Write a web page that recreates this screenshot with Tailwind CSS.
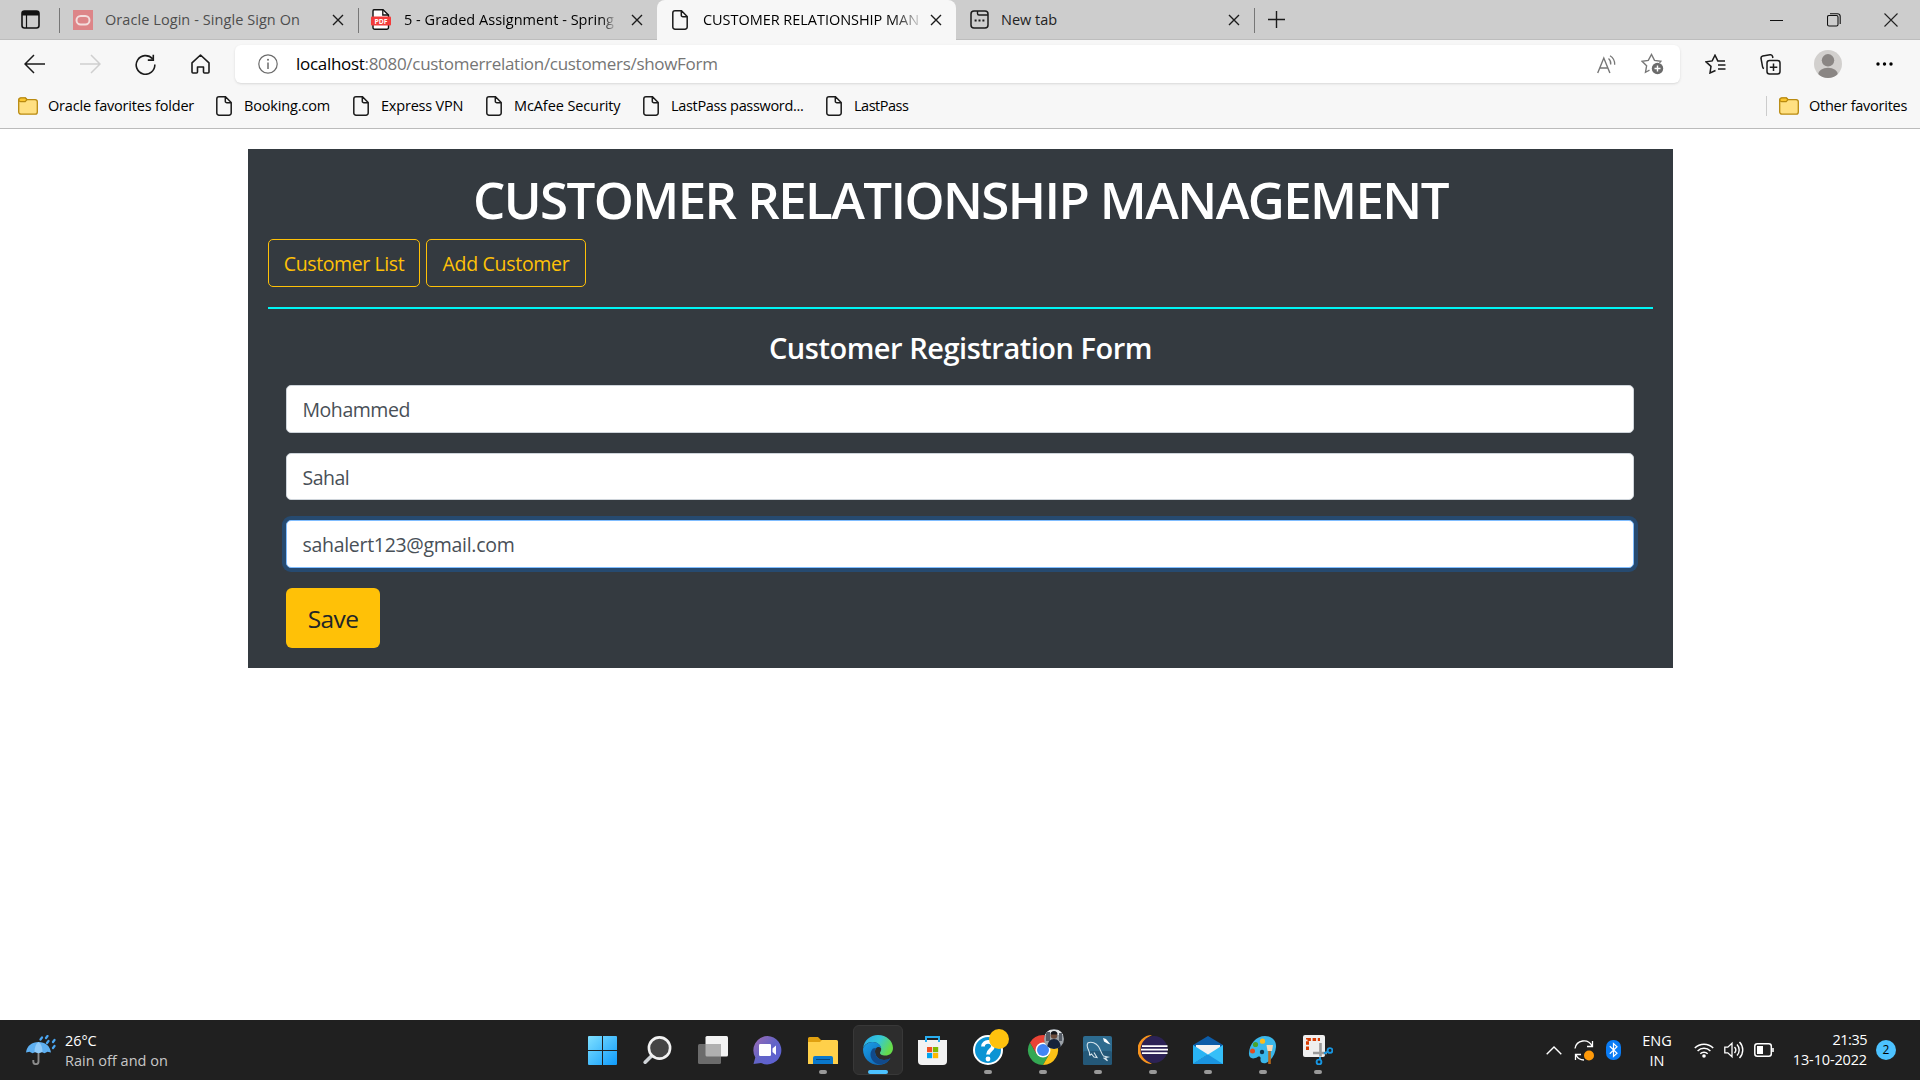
<!DOCTYPE html>
<html lang="en">
<head>
<meta charset="utf-8">
<title>CUSTOMER RELATIONSHIP MANAGEMENT</title>
<script src="https://cdn.jsdelivr.net/npm/@tailwindcss/browser@4"></script>
</head>
<body class="w-[1920px] h-[1080px] overflow-hidden bg-white font-['Open_Sans','Noto_Sans',sans-serif] flex flex-col text-[14.5px] whitespace-nowrap text-black">
<svg class="hidden">
  <symbol id="x" viewBox="0 0 12 12"><path d="M1 1l10 10M11 1L1 11" stroke="#1b1b1b" stroke-width="1.4" fill="none"/></symbol>
  <symbol id="page" viewBox="0 0 16 20"><path d="M3 .8h6.5L15.2 6.5V17a2.2 2.2 0 0 1-2.2 2.2H3A2.2 2.2 0 0 1 .8 17V3A2.2 2.2 0 0 1 3 .8zM9.3 1v4.2a1.6 1.6 0 0 0 1.6 1.6H15" stroke="#1b1b1b" stroke-width="1.5" fill="none"/></symbol>
  <symbol id="folder" viewBox="0 0 20 18"><path d="M.7 3v12a2.2 2.2 0 0 0 2.2 2.2h14.2a2.2 2.2 0 0 0 2.2-2.2V4.800a2.200 2.200 0 0 0-2.200-2.200H9.200L7.500.9H2.900A2.200 2.200 0 0 0 .7 3z" fill="#ffe082" stroke="#b98a10" stroke-width="1.300"/><path d="M.9 3A2 2 0 0 1 3 1h4.300l1.600 1.700-1.700 1.900H2.500A1.700 1.700 0 0 1 .9 3z" fill="#fbc62f" stroke="#b98a10" stroke-width="1.100"/></symbol>
</svg>

<!-- tab strip -->
<header class="h-10 bg-[#cdcdcd] flex shrink-0 border-b border-[#bdbdbd]">
  <div class="w-[59px] flex items-center pl-[20.500px]">
    <svg class="w-[19px] h-[19px]" viewBox="0 0 19 19"><rect x="1" y="1" width="17" height="17" rx="2.5" fill="none" stroke="#111" stroke-width="1.600"/><path d="M1 5.500V3a2 2 0 0 1 2-2h13a2 2 0 0 1 2 2v2.500z" fill="#111"/><path d="M5.500 5v13" stroke="#111" stroke-width="1.200"/></svg>
  </div>
  <div class="w-px h-[25px] mt-2 bg-[#777]"></div>
  <div class="w-[298px] flex items-center pl-[13px]">
    <svg class="w-5 h-5" viewBox="0 0 20 20"><rect width="20" height="20" fill="#dd8588"/><rect x="3.500" y="6" width="13" height="8.500" rx="4.200" fill="none" stroke="#f3dddd" stroke-width="2"/></svg>
    <span class="ml-3 w-[227px] text-[#4d4d4d] tracking-[0.07px]">Oracle Login - Single Sign On</span>
    <svg class="w-3 h-3"><use href="#x"/></svg>
  </div>
  <div class="w-px h-[25px] mt-2 bg-[#777]"></div>
  <div class="w-[298px] flex items-center pl-3">
    <svg class="w-5 h-[21px]" viewBox="0 0 20 21"><path d="M3 .8h9L17.500 6v12.500a1.800 1.800 0 0 1-1.800 1.800H3.800A1.800 1.800 0 0 1 2 18.500V2A1.200 1.200 0 0 1 3 .8z" fill="#fff" stroke="#111" stroke-width="1.400"/><path d="M11.800.8V6h5.700" fill="none" stroke="#111" stroke-width="1.300"/><rect y="7.500" width="20" height="9" rx="1" fill="#f33b3b"/><text x="10" y="14.600" font-size="6.800" font-weight="700" text-anchor="middle" fill="#fff">PDF</text></svg>
    <span class="ml-[13px] w-[227px] overflow-hidden"><span class="tracking-[0.03px] bg-linear-to-r from-black from-93% to-[#aaa] bg-clip-text text-transparent">5 - Graded Assignment - Spring</span></span>
    <svg class="w-3 h-3"><use href="#x"/></svg>
  </div>
  <div class="w-[299px] h-10 bg-[#f7f7f7] rounded-t-lg flex items-center pl-[15px] relative z-10">
    <svg class="w-4 h-5"><use href="#page"/></svg>
    <span class="ml-[15px] w-[227px] overflow-hidden"><span class="tracking-[-0.04px] bg-linear-to-r from-black from-85% to-[#ccc] bg-clip-text text-transparent">CUSTOMER RELATIONSHIP MAN</span></span>
    <svg class="w-3 h-3"><use href="#x"/></svg>
  </div>
  <div class="w-[298px] flex items-center pl-[14px]">
    <svg class="w-[19px] h-[19px]" viewBox="0 0 19 19"><rect x="1" y="1" width="17" height="17" rx="3" fill="none" stroke="#1b1b1b" stroke-width="1.500"/><path d="M7.500 1v2.500a1.500 1.500 0 0 0 1.500 1.500h9" fill="none" stroke="#1b1b1b" stroke-width="1.400"/><path d="M4.600 10.500h2M8.500 10.500h2M12.400 10.500h2" stroke="#1b1b1b" stroke-width="2"/></svg>
    <span class="ml-[12px] w-[227px] text-[#222]">New tab</span>
    <svg class="w-3 h-3"><use href="#x"/></svg>
  </div>
  <div class="w-px h-[25px] mt-2 bg-[#777]"></div>
  <div class="flex items-center pl-[13px]"><svg class="w-[17px] h-[17px]" viewBox="0 0 17 17"><path d="M8.500 0v17M0 8.500h17" stroke="#1b1b1b" stroke-width="1.400"/></svg></div>
  <div class="ml-auto mr-[22px] flex items-center gap-[43px]">
    <svg class="w-[14px] h-[14px]" viewBox="0 0 14 14"><path d="M0 7.500h13" stroke="#111"/></svg>
    <svg class="w-[14px] h-[14px]" viewBox="0 0 14 14"><rect x=".5" y="2.500" width="10.500" height="10.500" rx="1.500" fill="none" stroke="#111" stroke-width="1.100"/><path d="M3 .7h7.500A2.700 2.700 0 0 1 13.200 3.400V11" fill="none" stroke="#111" stroke-width="1.100"/></svg>
    <svg class="w-[14px] h-[14px]" viewBox="0 0 14 14"><path d="M.5.5l13 13M13.500.5l-13 13" stroke="#222" stroke-width="1.100"/></svg>
  </div>
</header>

<!-- address row -->
<div class="h-[48px] bg-[#f7f7f7] shrink-0 flex items-center pl-6">
  <svg class="w-[21px] h-5" viewBox="0 0 21 20"><path d="M10 1L1 10l9 9M1 10h20" fill="none" stroke="#1b1b1b" stroke-width="1.500"/></svg>
  <svg class="w-[21px] h-5 ml-[35px]" viewBox="0 0 21 20"><path d="M11 1l9 9-9 9M20 10H0" fill="none" stroke="#cfcfcf" stroke-width="1.500"/></svg>
  <svg class="w-[21px] h-[21px] ml-[34px]" viewBox="0 0 21 21"><path d="M17.500 4.800A9.300 9.300 0 1 0 19.800 10.500M18.300.8v5.300h-5.500" fill="none" stroke="#1b1b1b" stroke-width="1.600"/></svg>
  <svg class="w-[19px] h-5 ml-[35px]" viewBox="0 0 19 20"><path d="M1 8.800L9.500 1 18 8.800V18a1 1 0 0 1-1 1h-3.500a1 1 0 0 1-1-1v-5H6.500v5a1 1 0 0 1-1 1H2a1 1 0 0 1-1-1z" fill="none" stroke="#1b1b1b" stroke-width="1.600" stroke-linejoin="round"/></svg>
  <div class="ml-[25px] w-[1445px] h-[38px] bg-white rounded-md shadow-sm flex items-center pl-[23px] text-[17px]">
    <svg class="w-5 h-5" viewBox="0 0 20 20"><circle cx="10" cy="10" r="9.200" fill="none" stroke="#6b6b6b" stroke-width="1.200"/><path d="M10 8.500V15" stroke="#6b6b6b" stroke-width="1.500"/><circle cx="10" cy="5.800" r="1" fill="#6b6b6b"/></svg>
    <span class="ml-[18px] text-[#757575] tracking-[-0.3px]"><span class="text-black">localhost</span>:8080/customerrelation/customers/showForm</span>
    <svg class="w-[20px] h-[19px] ml-auto" viewBox="0 0 20 19"><path d="M.7 18L6.800 3l6.100 15M2.800 13h8" fill="none" stroke="#777" stroke-width="1.400"/><path d="M11.500 3.500a6.500 6.500 0 0 1 2.200 6M13 .8a10 10 0 0 1 4.700 9" fill="none" stroke="#777" stroke-width="1.300"/></svg>
    <svg class="w-[23px] h-[22px] ml-6 mr-4" viewBox="0 0 23 22"><path d="M6 18.500L4.500 19.300 5.600 12.800 1 8.300l6.300-.9L10.500 1.500l3 5.900 6.300.9-1.300 1.500M8.500 17.200L6 18.500" fill="none" stroke="#777" stroke-width="1.400"/><circle cx="16.500" cy="15.500" r="5.700" fill="#6b6b6b"/><path d="M16.500 12.500v6M13.500 15.500h6" stroke="#fff" stroke-width="1.400"/></svg>
  </div>
  <svg class="w-[21px] h-5 ml-[25px]" viewBox="0 0 21 20"><path d="M10.500 16.500L5 19l1-6.600L1 7.800l6.200-.9L10 1.200l2.800 5.700H20M13 11h7.500M13 15h7.500" fill="none" stroke="#1b1b1b" stroke-width="1.500"/></svg>
  <svg class="w-[21px] h-[21px] ml-[34px]" viewBox="0 0 21 21"><rect x="7" y="6.500" width="13" height="13.500" rx="2.500" fill="none" stroke="#1b1b1b" stroke-width="1.500"/><path d="M13.500 9.500v7.500M9.800 13.200h7.500M4 14.500a2 2 0 0 1-1.400-1.700L1 4.500A2.300 2.300 0 0 1 2.700 2L10 .8a2.300 2.300 0 0 1 2.600 1.700l.3 1.500" fill="none" stroke="#1b1b1b" stroke-width="1.500"/></svg>
  <svg class="w-7 h-7 ml-[33px]" viewBox="0 0 28 28"><clipPath id="av"><circle cx="14" cy="14" r="14"/></clipPath><g clip-path="url(#av)"><rect width="28" height="28" fill="#d2d0ce"/><circle cx="14" cy="10.300" r="6.200" fill="#8a8684"/><ellipse cx="14" cy="25" rx="10" ry="7.300" fill="#8a8684"/></g></svg>
  <svg class="w-[17px] h-1 ml-[34px]" viewBox="0 0 17 4"><circle cx="2" cy="2" r="1.700"/><circle cx="8.500" cy="2" r="1.700"/><circle cx="15" cy="2" r="1.700"/></svg>
</div>

<!-- favourites bar -->
<div class="h-[41px] bg-[#f7f7f7] border-b border-[#bbb] shrink-0 flex items-center pl-[18px] pb-1">
  <svg class="w-5 h-[18px]"><use href="#folder"/></svg><span class="ml-[10px] w-[168px] tracking-[-0.19px]">Oracle favorites folder</span>
  <svg class="w-4 h-5"><use href="#page"/></svg><span class="ml-3 w-[109px] tracking-[-0.15px]">Booking.com</span>
  <svg class="w-4 h-5"><use href="#page"/></svg><span class="ml-3 w-[105px] tracking-[-0.2px]">Express VPN</span>
  <svg class="w-4 h-5"><use href="#page"/></svg><span class="ml-3 w-[129px] tracking-[-0.1px]">McAfee Security</span>
  <svg class="w-4 h-5"><use href="#page"/></svg><span class="ml-3 w-[155px] tracking-[-0.33px]">LastPass password...</span>
  <svg class="w-4 h-5"><use href="#page"/></svg><span class="ml-3 tracking-[-0.5px]">LastPass</span>
  <div class="ml-auto w-px h-5 bg-[#ccc]"></div>
  <svg class="w-5 h-[18px] ml-3"><use href="#folder"/></svg><span class="ml-[10px] w-[111px] tracking-[-0.25px]">Other favorites</span>
</div>

<!-- page -->
<main class="flex-1 pt-5 pl-[248px]">
  <section class="w-[1425px] h-[519px] bg-[#343a40] px-5 pt-5">
    <h1 class="h-[70px] leading-[60px] text-[51px] font-semibold text-white text-center tracking-[-1.6px]">CUSTOMER RELATIONSHIP MANAGEMENT</h1>
    <div class="flex gap-[6px] text-[19.500px] text-[#ffc107]">
      <a class="w-[152px] h-12 border border-[#ffc107] rounded-[5px] flex items-center justify-center pt-0.5 tracking-[-0.4px]">Customer List</a>
      <a class="w-[160px] h-12 border border-[#ffc107] rounded-[5px] flex items-center justify-center pt-0.5 tracking-[-0.3px]">Add Customer</a>
    </div>
    <div class="h-[2px] mt-5 bg-[#00f5f5]"></div>
    <h3 class="mt-5 h-14 leading-[38px] text-[29px] font-semibold text-white text-center tracking-[-0.47px]">Customer Registration Form</h3>
    <form class="ml-[18px] w-[1348px] text-[19.500px] text-[#495057]">
      <div class="h-12 bg-white border border-[#ced4da] rounded-[5px] px-[15.500px] pt-0.5 flex items-center tracking-[-0.45px]">Mohammed</div>
      <div class="h-[47px] mt-5 bg-white border border-[#ced4da] rounded-[5px] px-[15.500px] pt-0.5 flex items-center tracking-[-0.5px]">Sahal</div>
      <div class="h-12 mt-5 bg-white border border-[#80bdff] rounded-[5px] px-[15.500px] pt-0.5 flex items-center ring-4 ring-[#264a70] tracking-[-0.3px]">sahalert123@gmail.com</div>
      <div class="w-[94px] h-[60px] mt-5 bg-[#ffc107] rounded-md flex items-center justify-center pt-0.5 text-[24.500px] text-[#212529] tracking-[-0.6px]">Save</div>
    </form>
  </section>
</main>

<!-- taskbar -->
<footer class="h-[60px] bg-[#202020] shrink-0 flex items-center text-white text-[14.500px] leading-[20px]">
  <div class="w-[575px] flex pl-[26px] items-center">
    <svg class="w-[30px] h-[30px]" viewBox="0 0 30 30"><path d="M12.500 16v10.500a2.600 2.600 0 0 1-5.200 0V25" fill="none" stroke="#8b8b8b" stroke-width="1.900"/><path d="M0 17.500C1 10.500 6 7 12.500 7S24 10.500 25 17.500l-3.500-.8-3 1.500-3-1.200-3 1.200-3-1.200-3 1.200-3-1.500z" fill="#5eb0f2"/><path d="M12.500 7c-3 2-4 6-4 10l4 1.200 4-1.200c0-4-1-8-4-10z" fill="#90cbfa"/><path d="M16 2.500l-1.500 2M21.500 1L20 3M22.500 6L21 8M28.500 5L27 7M28.500 11L27 13" stroke="#4aa5f0" stroke-width="2.200" stroke-linecap="round"/></svg>
    <div class="ml-[9px] mt-0.5 flex flex-col"><span class="tracking-[-0.1px]">26°C</span><span class="text-[#c8c8c8]">Rain off and on</span></div>
  </div>
  <div class="flex">
    <div class="w-[55px] h-[60px] flex justify-center pt-4"><svg class="w-[29px] h-[29px]" viewBox="0 0 29 29"><defs><linearGradient id="wi" x1="0" y1="0" x2="1" y2="1"><stop stop-color="#7fe0ff"/><stop offset="1" stop-color="#0f9bfb"/></linearGradient></defs><path fill="url(#wi)" d="M1 0h13v14H0V1a1 1 0 0 1 1-1zM15 0h13a1 1 0 0 1 1 1v13H15zM0 15h14v14H1a1 1 0 0 1-1-1zM15 15h14v13a1 1 0 0 1-1 1H15z"/></svg></div>
    <div class="w-[55px] h-[60px] flex justify-center pt-4"><svg class="w-[29px] h-[29px]" viewBox="0 0 29 29"><path d="M9 19.500L2.200 26.200" stroke="#d0d4d8" stroke-width="3.600" stroke-linecap="round"/><circle cx="16.500" cy="12" r="10.600" fill="#454545" stroke="#f2f2f2" stroke-width="2.600"/></svg></div>
    <div class="w-[55px] h-[60px] flex justify-center pt-4"><svg class="w-[30px] h-[29px]" viewBox="0 0 30 29"><rect x="7.500" y="0" width="22.500" height="20.500" rx="1.500" fill="#f3f3f3"/><rect x="0" y="8" width="23" height="20" rx="1.500" fill="#6b6b6b"/><path d="M7.500 8H23v12.500H9a1.500 1.500 0 0 1-1.500-1.500z" fill="#b0b0b0"/></svg></div>
    <div class="w-[55px] h-[60px] flex justify-center pt-4"><svg class="w-[29px] h-[29px]" viewBox="0 0 29 29"><defs><linearGradient id="ch" x1="0" y1="0" x2="1" y2="1"><stop stop-color="#a06ab0"/><stop offset=".5" stop-color="#6264c7"/><stop offset="1" stop-color="#5b60d6"/></linearGradient></defs><path d="M14.500 0A14.200 14.200 0 1 1 8 27L.5 28l1.800-6.500A14.300 14.300 0 0 1 14.500 0z" fill="url(#ch)"/><rect x="6" y="8" width="12" height="12" rx="1.200" fill="#fff"/><path d="M19.500 12.500L23 9.500v9.500l-3.500-3z" fill="#fff"/></svg></div>
    <div class="w-[55px] h-[60px] flex flex-col items-center pt-[17px]"><svg class="w-[30px] h-[28px]" viewBox="0 0 30 28"><path d="M0 1.500A1.500 1.500 0 0 1 1.500 0h8.500l3 3H28v8H0z" fill="#e0a010"/><path d="M0 5h12l2-2h14.500A1.500 1.500 0 0 1 30 4.500V27H0z" fill="#ffd04a"/><path d="M5 27v-6a2 2 0 0 1 2-2h16a2 2 0 0 1 2 2v6z" fill="#0a78cc"/><path d="M8 22.500h14" stroke="#06467e"/></svg><i class="w-2 h-1 mt-[5px] rounded-full bg-[#999]"></i></div>
    <div class="w-[55px] h-[60px] flex justify-center pt-[5px]"><div class="w-[50px] h-[50px] rounded-md bg-[#2d2d2d] border border-[#383838] flex flex-col items-center pt-[9px]"><svg class="w-[30px] h-[30px]" viewBox="0 0 30 30"><defs><linearGradient id="e1" x1="0" y1="0" x2="1" y2=".4"><stop stop-color="#28a8ea"/><stop offset=".55" stop-color="#35c8d8"/><stop offset="1" stop-color="#66dc4a"/></linearGradient><linearGradient id="e2" x1="0" y1="0" x2="1" y2="1"><stop stop-color="#1aa0e8"/><stop offset="1" stop-color="#0c58a8"/></linearGradient></defs><path d="M.2 13C1 5.500 7 0 15 0c8.500 0 15 6 15 13 0 5-3.700 7.500-7.500 7.500-4 0-5.500-1.500-5.500-2.500 0-1 1.200-1.500 1.200-4C18.200 10.500 14.500 7 9.500 7 4.500 7 1.500 10 .2 13z" fill="url(#e1)"/><path d="M.1 13.500C1.500 10 5 7 9.500 7c5 0 8.500 3 8.700 6.200-1-1-2.200-1.500-3.400-1.200-2 .5-2.800 2.500-2.800 4.500 0 5 4.500 8.500 9 8.500 3 0 5.200-1 6.500-2C25 27.500 20.500 30 15 30 6.500 30-.7 22.500.1 13.500z" fill="url(#e2)"/><path d="M10 13.500C8.500 15 7.500 17 7.500 19.500c0 5 4 9.500 10 10.200 4-.7 8-3.200 10-6.700-1.300 1-3.500 2-6.500 2-4.500 0-9-3.500-9-8.500 0-1.500.3-2.500 1-3.500z" fill="#114a8b"/></svg><i class="w-5 h-1 mt-[5px] shrink-0 rounded-full bg-[#4cc2ff]"></i></div></div>
    <div class="w-[55px] h-[60px] flex justify-center pt-4"><svg class="w-[29px] h-[29px]" viewBox="0 0 29 29"><path d="M8 5V1h13v4" fill="none" stroke="#29aef0" stroke-width="2"/><path d="M0 4h29v21a4 4 0 0 1-4 4H4a4 4 0 0 1-4-4z" fill="#f2f2f2"/><path d="M8 4v2M21 4v2" stroke="#29aef0" stroke-width="2"/><path d="M9 11h5.200v5.200H9z" fill="#f25022"/><path d="M15 11h5.200v5.200H15z" fill="#7fba00"/><path d="M9 17h5.200v5.200H9z" fill="#00a4ef"/><path d="M15 17h5.200v5.200H15z" fill="#ffb900"/></svg></div>
    <div class="w-[55px] h-[60px] flex flex-col items-center pt-2"><svg class="w-[42px] h-[38px]" viewBox="0 0 42 38"><circle cx="21" cy="22" r="14" fill="#0b94d4" stroke="#fff" stroke-width="2"/><path d="M16 18.500c0-6 10-6 10-.5 0 4-5 4-5 8.500" fill="none" stroke="#fff" stroke-width="3.800"/><circle cx="21" cy="31" r="2.400" fill="#fff"/><circle cx="32" cy="11" r="10" fill="#ffc20e"/></svg><i class="w-2 h-1 mt-1 rounded-full bg-[#999]"></i></div>
    <div class="w-[55px] h-[60px] flex flex-col items-center pt-2"><svg class="w-[42px] h-[38px]" viewBox="0 0 42 38"><path d="M8 14.500A15 15 0 0 0 21 37l6.500-11.300H14.500z" fill="#34a853"/><path d="M21 22l6.500 3.700L21 37a15 15 0 0 0 13-22.500H21z" fill="#fbc116"/><path d="M8 14.500A15 15 0 0 1 34 14.500H21v7.500l-6.500 3.700z" fill="#ea4335"/><circle cx="21" cy="22" r="7.500" fill="#fff"/><circle cx="21" cy="22" r="6" fill="#4285f4"/><clipPath id="ph"><circle cx="32" cy="11" r="10"/></clipPath><g clip-path="url(#ph)"><rect x="22" width="20" height="22" fill="#9ca2a8"/><path d="M22 2h20v5H22z" fill="#e0e3e6"/><path d="M24 4h4v9h-4zM37 5h3v8h-3z" fill="#555c66"/><circle cx="32" cy="7.500" r="3.300" fill="#6b4a3a"/><path d="M28.500 6.500a3.500 3.500 0 0 1 7 0z" fill="#15171c"/><path d="M25 22c0-8 3-11 7-11s7 3 7 11z" fill="#16223a"/></g></svg><i class="w-2 h-1 mt-1 rounded-full bg-[#999]"></i></div>
    <div class="w-[55px] h-[60px] flex flex-col items-center pt-4"><svg class="w-[29px] h-[29px]" viewBox="0 0 29 29"><rect width="29" height="29" rx="2" fill="#2d6b8f"/><rect y="15" width="29" height="14" rx="2" fill="#245878"/><path d="M6.500 19.500c.5-2 .3-3-.8-5C4 11 3.500 8.500 5 6.800c3.500-1.500 8 .2 10.500 3.700 2 3 2.500 6.500 5 9.500l4.500 1-2.500.8 2 3-4-3M6.500 19.500l2-1.500 2.500 3 3 .5-3-5" fill="none" stroke="#d5e4ec" stroke-width="1.100"/><path d="M20 2l3 1 2.500 3 2 2.500-3-1-3.500-2z" fill="#fff"/></svg><i class="w-2 h-1 mt-[5px] rounded-full bg-[#999]"></i></div>
    <div class="w-[55px] h-[60px] flex flex-col items-center pt-[15px]"><svg class="w-[30px] h-[30px]" viewBox="0 0 30 30"><path d="M14 0A14.500 14.500 0 0 0 14 29 16 16 0 0 1 14 0z" fill="#f7941e"/><circle cx="16" cy="14.500" r="13.500" fill="#2c2255"/><path d="M4 11.200h25.500M3 14.700h27M4 18.200h25.500" stroke="#fff" stroke-width="1.700"/></svg><i class="w-2 h-1 mt-[5px] rounded-full bg-[#999]"></i></div>
    <div class="w-[55px] h-[60px] flex flex-col items-center pt-4"><svg class="w-[30px] h-[29px]" viewBox="0 0 30 29"><path d="M0 9L15 0l15 9v8H0z" fill="#0c5ca8"/><path d="M3 9h24v10H3z" fill="#f2f2f2"/><path d="M0 9l15 9.500L0 28z" fill="#29b4f4"/><path d="M30 9L0 28h30z" fill="#35bff8"/><path d="M15 18.500L30 28H0z" fill="#1a94e0"/></svg><i class="w-2 h-1 mt-[5px] rounded-full bg-[#999]"></i></div>
    <div class="w-[55px] h-[60px] flex flex-col items-center pt-4"><svg class="w-[29px] h-[29px]" viewBox="0 0 29 29"><path d="M17 0c7 0 11.500 4.500 11 11-.5 7-4 13-10 16-3 1-6-.5-5.500-4 .5-2-1-3-3-2-5 3-9 1-8.500-4C1.500 8 8 0 17 0z" fill="#3ab7ea"/><circle cx="7.500" cy="8.500" r="2.600" fill="#4aa32c"/><circle cx="14.500" cy="5.200" r="2.600" fill="#fbbc1c"/><circle cx="4.500" cy="15" r="2.500" fill="#e34a1c"/><circle cx="14" cy="16" r="2.200" fill="#11354c"/><path d="M21.500 13v15" stroke="#b86a1c" stroke-width="2.600"/><path d="M18.500 9h6.500l-1 6h-4.500z" fill="#f4d9b8"/></svg><i class="w-2 h-1 mt-[5px] rounded-full bg-[#999]"></i></div>
    <div class="w-[55px] h-[60px] flex flex-col items-center pt-[15px]"><svg class="w-[30px] h-[30px]" viewBox="0 0 30 30"><rect width="22" height="22" rx="2" fill="#efefef"/><path d="M4.500 15V4.500H17" fill="none" stroke="#d83b01" stroke-width="3" stroke-dasharray="3.500 1.700"/><path d="M17.500 8v13.500M10 18h14" stroke="#9a9a9a" stroke-width="2.600"/><circle cx="27" cy="15.500" r="2.400" fill="none" stroke="#1795e0" stroke-width="1.900"/><circle cx="16" cy="27" r="2.400" fill="none" stroke="#1795e0" stroke-width="1.900"/><path d="M21 18.500l4-1.800M17 22v3" stroke="#1795e0" stroke-width="2"/></svg><i class="w-2 h-1 mt-[5px] rounded-full bg-[#999]"></i></div>
  </div>
  <div class="ml-auto flex items-center mr-6">
    <svg class="w-4 h-[9px]" viewBox="0 0 16 9"><path d="M.7 8.300L8 1l7.300 7.300" fill="none" stroke="#fff" stroke-width="1.400"/></svg>
    <svg class="w-5 h-[21px] ml-3" viewBox="0 0 20 21"><path d="M1 8.500a9 9 0 0 1 17-2.500M18.500 1v5.500H13M1.500 20v-5.500H7M2 15a9 9 0 0 0 8 5" fill="none" stroke="#fff" stroke-width="1.300"/><circle cx="15" cy="15.500" r="5" fill="#ff9a0a"/></svg>
    <svg class="w-[15px] h-5 ml-[12px] mr-px" viewBox="0 0 15 20"><rect width="15" height="20" rx="7" fill="#0a7cf5"/><path d="M3.800 6.300l7.200 7-3.500 3.200V3.500L11 6.700l-7.200 7" fill="none" stroke="#fff" stroke-width="1.200"/></svg>
    <div class="w-[30px] ml-5 mt-0.5 flex flex-col items-center"><span>ENG</span><span>IN</span></div>
    <svg class="w-5 h-4 ml-[22px]" viewBox="0 0 20 16"><path d="M.8 6a13 13 0 0 1 18.400 0M3.600 9a9 9 0 0 1 12.800 0M6.300 11.800a5.200 5.200 0 0 1 7.400 0" fill="none" stroke="#fff" stroke-width="1.500"/><circle cx="10" cy="14" r="1.800" fill="#fff"/></svg>
    <svg class="w-5 h-[18px] ml-[10px]" viewBox="0 0 20 18"><path d="M.8 6.200h3L8 2.200v13.600l-4.200-4h-3z" fill="none" stroke="#fff" stroke-width="1.300"/><path d="M10.500 6a4.500 4.500 0 0 1 0 6M13 3.500a8 8 0 0 1 0 11M15.500 1a11.500 11.500 0 0 1 0 16" fill="none" stroke="#fff" stroke-width="1.400"/></svg>
    <svg class="w-5 h-[14px] ml-[10px]" viewBox="0 0 20 14"><rect x=".8" y=".8" width="16.500" height="12.400" rx="2.500" fill="none" stroke="#fff" stroke-width="1.500"/><rect x="3" y="3" width="6" height="8" fill="#fff"/><path d="M19 5v4" stroke="#fff" stroke-width="1.600"/></svg>
    <div class="w-[74px] ml-[19px] flex flex-col items-end"><span class="tracking-[-0.5px]">21:35</span><span class="tracking-[-0.15px]">13-10-2022</span></div>
    <div class="w-5 h-5 ml-[9px] rounded-full bg-[#4cc2ff] text-black text-[12px] flex items-center justify-center">2</div>
  </div>
</footer>
</body>
</html>
